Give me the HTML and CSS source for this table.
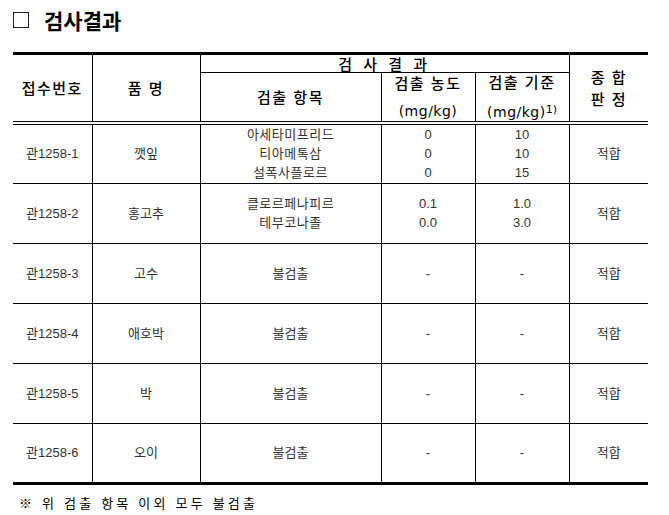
FILE: index.html
```html
<!DOCTYPE html>
<html lang="ko">
<head>
<meta charset="utf-8">
<link rel="stylesheet" href="styles.css">
</head>
<body>
<div class="page">
  <h1 class="title"><span class="box"></span><span class="title-text">검사결과</span></h1>
  <table class="results">
    <colgroup>
      <col class="c1"><col class="c2"><col class="c3"><col class="c4"><col class="c5"><col class="c6">
    </colgroup>
    <thead>
      <tr class="h1">
        <th rowspan="2" class="edge-l hb">접수번호</th>
        <th rowspan="2" class="hb">품 명</th>
        <th colspan="3" class="wide">검 사 결 과</th>
        <th rowspan="2" class="edge-r hb"><div class="two">종 합</div><div class="two">판 정</div></th>
      </tr>
      <tr class="h2">
        <th class="hb">검출 항목</th>
        <th class="hb"><div class="l1">검출 농도</div><div class="l2">(mg/kg)</div></th>
        <th class="hb"><div class="l1">검출 기준</div><div class="l2">(mg/kg)<span class="sup">1)</span></div></th>
      </tr>
    </thead>
    <tbody>
      <tr class="r3">
        <td class="edge-l">관1258-1</td>
        <td>깻잎</td>
        <td class="items"><div>아세타미프리드</div><div>티아메톡삼</div><div>설폭사플로르</div></td>
        <td><div>0</div><div>0</div><div>0</div></td>
        <td><div>10</div><div>10</div><div>15</div></td>
        <td class="edge-r">적합</td>
      </tr>
      <tr class="r2">
        <td class="edge-l">관1258-2</td>
        <td>홍고추</td>
        <td class="items"><div>클로르페나피르</div><div>테부코나졸</div></td>
        <td><div>0.1</div><div>0.0</div></td>
        <td><div>1.0</div><div>3.0</div></td>
        <td class="edge-r">적합</td>
      </tr>
      <tr class="r1">
        <td class="edge-l">관1258-3</td>
        <td>고수</td>
        <td>불검출</td>
        <td>-</td>
        <td>-</td>
        <td class="edge-r">적합</td>
      </tr>
      <tr class="r1">
        <td class="edge-l">관1258-4</td>
        <td>애호박</td>
        <td>불검출</td>
        <td>-</td>
        <td>-</td>
        <td class="edge-r">적합</td>
      </tr>
      <tr class="r1">
        <td class="edge-l">관1258-5</td>
        <td>박</td>
        <td>불검출</td>
        <td>-</td>
        <td>-</td>
        <td class="edge-r">적합</td>
      </tr>
      <tr class="r1">
        <td class="edge-l">관1258-6</td>
        <td>오이</td>
        <td>불검출</td>
        <td>-</td>
        <td>-</td>
        <td class="edge-r">적합</td>
      </tr>
    </tbody>
  </table>
  <p class="note">※ 위 검출 항목 이외 모두 불검출</p>
</div>
</body>
</html>
```

FILE: styles.css
```css
html, body {
  margin: 0;
  padding: 0;
  background: #fff;
}
body {
  font-family: "Liberation Sans", "Noto Sans CJK KR", sans-serif;
  color: #000;
}
.page {
  padding-left: 13px;
  width: 635px;
}
.title {
  margin: 0;
  padding-top: 7px;
  height: 52px;
  box-sizing: border-box;
  display: flex;
  align-items: flex-start;
  font-size: 21px;
  line-height: 26px;
  font-weight: 700;
  font-family: "Noto Sans CJK KR", sans-serif;
}
.box {
  width: 14px;
  height: 14px;
  border: 1px solid #222;
  margin-top: 5px;
  margin-right: 15px;
}
.results {
  border-collapse: collapse;
  table-layout: fixed;
  width: 635px;
  border-top: 3px solid #000;
  border-bottom: 3px solid #000;
}
.c1 { width: 79px; }
.c2 { width: 108px; }
.c3 { width: 181px; }
.c4 { width: 94px; }
.c5 { width: 94px; }
.c6 { width: 79px; }
th, td {
  border: 1px solid #000;
  padding: 0;
  text-align: center;
  vertical-align: middle;
}
.edge-l { border-left: none; }
.edge-r { border-right: none; }
th {
  font-family: "Noto Sans CJK KR", sans-serif;
  font-weight: 500;
  font-size: 15px;
  letter-spacing: 1.5px;
  color: #000;
  line-height: 18px;
}
th.hb { border-bottom: 4px double #000; }
.h1 { height: 19px; }
.h1 .wide {
  letter-spacing: 3.5px;
  line-height: 17px;
}
.h2 { height: 43px; }
.two { line-height: 22px; }
.l1 { line-height: 18px; }
.l2 {
  line-height: 18px;
  margin-top: 10px;
  font-family: "DejaVu Sans", sans-serif;
  font-size: 14px;
  letter-spacing: 0.5px;
}
.sup {
  font-size: 11px;
  vertical-align: 4px;
  letter-spacing: 0;
}
td {
  font-family: "Liberation Sans", "Noto Sans CJK KR", sans-serif;
  font-size: 13px;
  line-height: 19px;
  color: #333;
}
td.items { letter-spacing: 0.5px; }
.r3, .r2, .r1 { height: 60px; }
.note {
  margin: 8px 0 0 6px;
  font-family: "Noto Sans CJK KR", sans-serif;
  font-size: 13px;
  line-height: 20px;
  letter-spacing: 3.2px;
  color: #000;
}
```
